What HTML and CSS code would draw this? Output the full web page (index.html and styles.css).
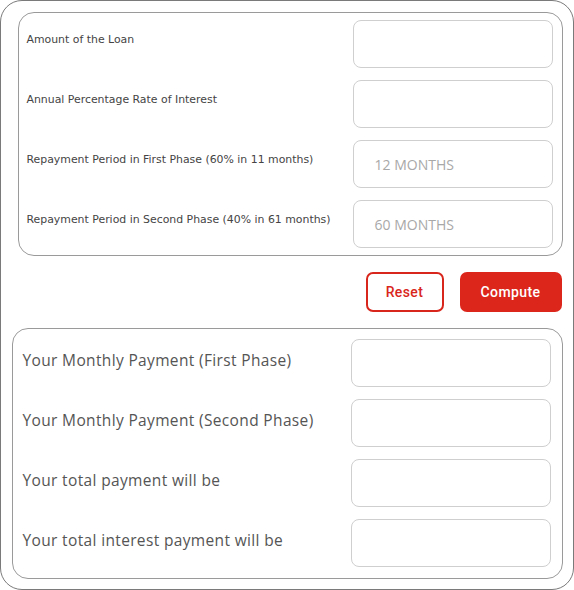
FILE: index.html
```html
<!DOCTYPE html>
<html>
<head>
<meta charset="utf-8">
<link rel="stylesheet" href="styles.css">
</head>
<body>
<div class="calc">
  <div class="card card-in">
    <div class="row">
      <label class="lbl-sm">Amount of the Loan</label>
      <div class="field"></div>
    </div>
    <div class="row">
      <label class="lbl-sm">Annual Percentage Rate of Interest</label>
      <div class="field"></div>
    </div>
    <div class="row">
      <label class="lbl-sm">Repayment Period in First Phase (60% in 11 months)</label>
      <div class="field"><span class="ph">12 MONTHS</span></div>
    </div>
    <div class="row">
      <label class="lbl-sm">Repayment Period in Second Phase (40% in 61 months)</label>
      <div class="field"><span class="ph">60 MONTHS</span></div>
    </div>
  </div>
  <div class="actions">
    <button class="btn btn-outline">Reset</button>
    <button class="btn btn-solid">Compute</button>
  </div>
  <div class="card card-out">
    <div class="row">
      <label class="lbl-lg">Your Monthly Payment (First Phase)</label>
      <div class="field"></div>
    </div>
    <div class="row">
      <label class="lbl-lg">Your Monthly Payment (Second Phase)</label>
      <div class="field"></div>
    </div>
    <div class="row">
      <label class="lbl-lg">Your total payment will be</label>
      <div class="field"></div>
    </div>
    <div class="row">
      <label class="lbl-lg">Your total interest payment will be</label>
      <div class="field"></div>
    </div>
  </div>
</div>
</body>
</html>
```
FILE: styles.css
```css
html, body {
  margin: 0;
  padding: 0;
  background: #fff;
}
.calc {
  box-sizing: border-box;
  width: 574px;
  height: 590px;
  border: 1.5px solid #7a7a7a;
  border-radius: 22px;
  padding: 10.5px 10.5px 0 0;
  display: flex;
  flex-direction: column;
  font-family: "Open Sans", sans-serif;
}
.card {
  box-sizing: border-box;
  border: 1px solid #9a9a9a;
  border-radius: 16px;
  display: flex;
  flex-direction: column;
  gap: 12px;
}
.card-in {
  margin-left: 16.5px;
  padding: 7px 9px 7px 8px;
}
.card-out {
  margin-left: 10.5px;
  padding: 10px 11px 11px 10px;
}
.row {
  display: flex;
  align-items: center;
}
.row label {
  flex: 1;
}
.lbl-sm {
  font-family: "DejaVu Sans", sans-serif;
  font-size: 10.9px;
  color: #444;
  padding-bottom: 8px;
}
.lbl-lg {
  font-size: 15.5px;
  font-weight: 500;
  color: #555;
  padding-bottom: 6px;
  letter-spacing: 0.35px;
}
.field {
  box-sizing: border-box;
  width: 200px;
  height: 48px;
  border: 1px solid #cfcfcf;
  border-radius: 8px;
  display: flex;
  align-items: center;
  padding-left: 21px;
}
.ph {
  font-family: "Open Sans", sans-serif;
  font-size: 14px;
  color: #a8a8a8;
  padding-top: 2px;
}
.actions {
  display: flex;
  justify-content: flex-end;
  gap: 16px;
  margin: 16px 1px 16px 0;
}
.btn {
  box-sizing: border-box;
  height: 40px;
  border-radius: 7px;
  font-family: Roboto, sans-serif;
  font-size: 14px;
  font-weight: 500;
  letter-spacing: 0.4px;
  cursor: pointer;
}
.btn-outline {
  width: 78px;
  background: #fff;
  border: 2px solid #d9261c;
  color: #d9261c;
}
.btn-solid {
  width: 102px;
  background: #dc261b;
  border: none;
  color: #fff;
}
```
